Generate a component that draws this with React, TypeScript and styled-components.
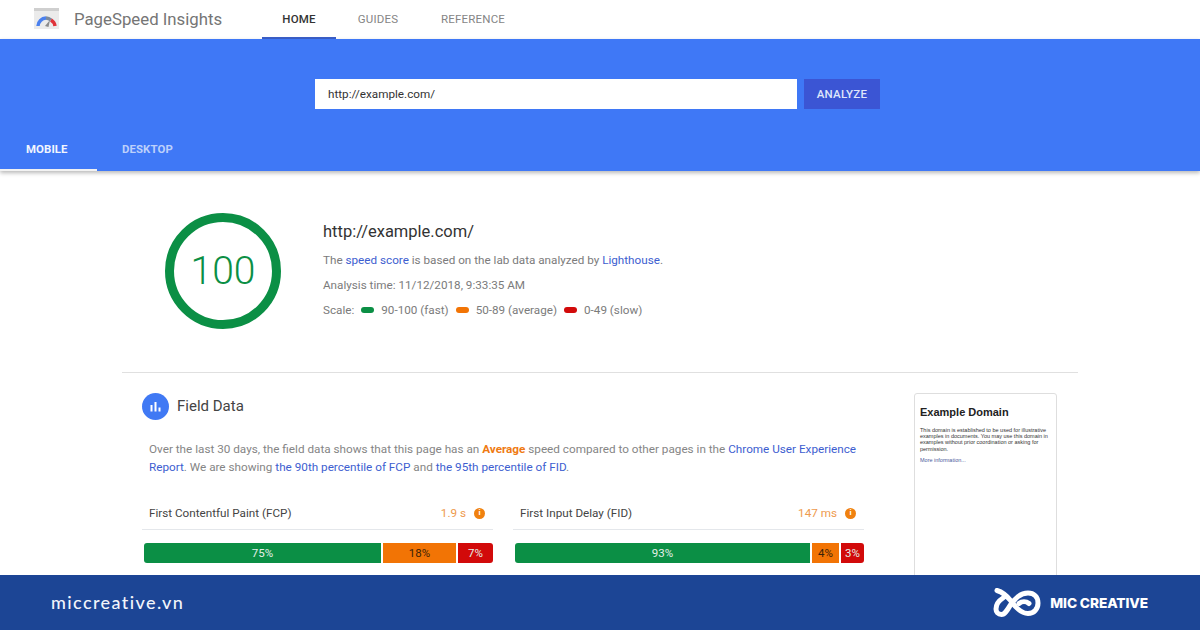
import React from 'react';
import styled, { createGlobalStyle } from 'styled-components';

const GlobalStyle = createGlobalStyle`
  html, body {
    margin: 0;
    padding: 0;
    background: #ffffff;
  }
  * {
    box-sizing: border-box;
  }
`;

const Page = styled.div`
  width: 1200px;
  height: 630px;
  display: flex;
  flex-direction: column;
  overflow: hidden;
  font-family: 'Roboto', sans-serif;
  background: #ffffff;
`;

const TopBar = styled.header`
  height: 39px;
  flex: none;
  display: flex;
  align-items: stretch;
  padding-left: 34px;
  background: #ffffff;
`;

const Brand = styled.div`
  width: 228px;
  display: flex;
  align-items: center;
  gap: 15px;
  padding-bottom: 2px;
`;

const BrandName = styled.span`
  font-size: 16.8px;
  color: #757575;
`;

const NavTab = styled.a<{ $active?: boolean; $width: number }>`
  width: ${p => p.$width}px;
  display: flex;
  align-items: center;
  justify-content: center;
  font-size: 11.5px;
  font-weight: ${p => (p.$active ? 500 : 400)};
  letter-spacing: 0.2px;
  color: ${p => (p.$active ? '#333333' : '#858585')};
  border-bottom: 2px solid ${p => (p.$active ? '#3b5fc9' : 'transparent')};
`;

const Hero = styled.section`
  height: 132px;
  flex: none;
  display: flex;
  flex-direction: column;
  background: #3f78f6;
  box-shadow: 0 2px 4px rgba(0, 0, 0, 0.28);
  position: relative;
`;

const SearchRow = styled.div`
  display: flex;
  gap: 7px;
  padding: 40px 0 0 315px;
`;

const UrlBox = styled.div`
  width: 482px;
  height: 30px;
  display: flex;
  align-items: center;
  padding-left: 13px;
  background: #ffffff;
  font-size: 11.7px;
  color: #333333;
`;

const AnalyzeButton = styled.button`
  width: 76px;
  height: 30px;
  padding: 0;
  border: none;
  background: #3b55d4;
  color: #dfe6fb;
  font-family: inherit;
  font-size: 11.5px;
  font-weight: 500;
  letter-spacing: 0.25px;
`;

const DeviceTabs = styled.div`
  display: flex;
  margin-top: auto;
`;

const DeviceTab = styled.div<{ $active?: boolean; $width: number }>`
  width: ${p => p.$width}px;
  height: 42px;
  padding: 13px 0 0 ${p => (p.$active ? 26 : 25)}px;
  font-size: 11.4px;
  font-weight: 700;
  letter-spacing: 0.1px;
  color: ${p => (p.$active ? '#f1f5fe' : '#bcd0fb')};
  border-bottom: 2px solid ${p => (p.$active ? '#f2f2f2' : 'transparent')};
`;

const Main = styled.main`
  flex: 1;
  min-height: 0;
  overflow: hidden;
  padding: 0 122px;
`;

const Summary = styled.section`
  height: 202px;
  display: flex;
  padding: 42px 0 0 43px;
  border-bottom: 1px solid #e0e0e0;
`;

const ScoreRing = styled.div`
  width: 116px;
  height: 116px;
  flex: none;
  display: flex;
  align-items: center;
  justify-content: center;
  border: 9px solid #0b8f45;
  border-radius: 50%;
  color: #0b8f45;
  font-size: 39px;
  font-weight: 300;
`;

const SummaryText = styled.div`
  margin-left: 42px;
  padding-top: 7px;
`;

const SummaryUrl = styled.h1`
  margin: 0 0 7px;
  height: 24px;
  font-size: 16.5px;
  font-weight: 400;
  line-height: 24px;
  color: #333333;
`;

const Line = styled.p`
  margin: 0 0 7px;
  height: 18px;
  display: flex;
  align-items: center;
  white-space: pre;
  font-size: 11.7px;
  line-height: 18px;
  color: #7b7b7b;
`;

const Link = styled.a`
  color: #3d5ed0;
`;

const ScaleDot = styled.i<{ $color: string }>`
  width: 13px;
  height: 6px;
  margin: 0 7px;
  border-radius: 3px;
  background: ${p => p.$color};
`;

const Field = styled.section`
  display: flex;
  padding: 20px 22px 0 20px;
`;

const FieldBody = styled.div`
  width: 722px;
`;

const FieldHead = styled.div`
  height: 27px;
  display: flex;
  align-items: center;
  gap: 8px;
`;

const FieldIcon = styled.span`
  width: 27px;
  height: 27px;
  display: flex;
  align-items: center;
  justify-content: center;
  border-radius: 50%;
  background: #4079f4;
`;

const FieldTitle = styled.h2`
  margin: 0;
  padding-bottom: 1px;
  font-size: 15px;
  font-weight: 400;
  color: #444444;
`;

const Description = styled.p`
  margin: 20px 0 0 7px;
  width: 715px;
  font-size: 11.72px;
  line-height: 18px;
  color: #858585;
`;

const Average = styled.b`
  font-weight: 700;
  color: #ef7a12;
`;

const Metrics = styled.div`
  display: grid;
  grid-template-columns: 351px 351px;
  column-gap: 20px;
  margin-top: 19px;
`;

const MetricRow = styled.div`
  height: 35px;
  display: flex;
  align-items: center;
  padding: 2px 8px 0 7px;
  border-bottom: 1px solid #e4e7eb;
  font-size: 11.7px;
  color: #444444;
`;

const MetricValue = styled.span`
  margin-left: auto;
  color: #ee9a4d;
`;

const InfoDot = styled.span`
  width: 11px;
  height: 11px;
  margin-left: 8px;
  display: flex;
  align-items: center;
  justify-content: center;
  border-radius: 50%;
  background: #f0810f;
  color: #fff;
  font-size: 8px;
  font-weight: 700;
  line-height: 1;
`;

const Bars = styled.div`
  display: flex;
  gap: 2px;
  margin: 13px 0 0 2px;
  height: 20px;
  border-radius: 3px;
  overflow: hidden;
`;

const Bar = styled.div<{ $color: string; $dark?: boolean; $width: number }>`
  width: ${p => p.$width}px;
  display: flex;
  align-items: center;
  justify-content: center;
  background: ${p => p.$color};
  color: ${p => (p.$dark ? '#3a2208' : '#e4f0e8')};
  font-size: 11.5px;
`;

const Preview = styled.aside`
  width: 143px;
  height: 260px;
  margin-left: 50px;
  padding: 12px 4px 13px 5px;
  flex: none;
  border: 1px solid #dedede;
  border-radius: 3px;
  font-family: 'Liberation Sans', Arial, sans-serif;
`;

const PreviewTitle = styled.h3`
  margin: 0 0 8px;
  font-size: 11px;
  font-weight: 700;
  line-height: 13px;
  color: #222222;
`;

const PreviewText = styled.p`
  margin: 0 0 5px;
  font-size: 5.5px;
  line-height: 6.2px;
  color: #333333;
`;

const PreviewLink = styled.a`
  display: block;
  font-size: 5.5px;
  line-height: 6px;
  color: #4a5a9c;
`;

const Footer = styled.footer`
  height: 55px;
  flex: none;
  display: flex;
  align-items: center;
  justify-content: space-between;
  padding: 0 52px 0 51px;
  background: #1c4595;
  color: #ffffff;
  position: relative;
`;

const Site = styled.span`
  font-family: 'Lato', sans-serif;
  font-size: 18px;
  font-weight: 500;
  letter-spacing: 1.4px;
  padding-bottom: 2px;
  color: #f2f5fb;
`;

const Mark = styled.div`
  display: flex;
  align-items: center;
  gap: 9px;
`;

const MarkName = styled.span`
  font-family: 'Inter', sans-serif;
  font-size: 13.7px;
  font-weight: 800;
  letter-spacing: -0.1px;
`;

const PsiLogo = () => (
  <svg width="25" height="21" viewBox="0 0 25 21">
    <rect x="0" y="0" width="25" height="21" fill="#ebebeb" />
    <rect x="0" y="0" width="25" height="3" fill="#cfcfcf" />
    <path d="M4 18 A8.5 8.5 0 0 1 12 10" fill="none" stroke="#4a80ee" strokeWidth="3.5" />
    <path d="M12 10 A8.5 8.5 0 0 1 17 12" fill="none" stroke="#7c8a9c" strokeWidth="3.5" />
    <path d="M17 12 A8.5 8.5 0 0 1 21 18" fill="none" stroke="#e0333a" strokeWidth="3.5" />
    <path d="M11 18 L16 12 L14.5 19 Z" fill="#8b8b8b" />
  </svg>
);

const KnotLogo = () => (
  <svg width="48" height="30" viewBox="0 0 48 30" fill="none" stroke="#ffffff" strokeWidth="5" strokeLinecap="round">
    <path d="M4 2.5 C9 4 14 8 18 13 C23 20 28 25.5 35 25.5 C41 25.5 45 21 45 15 C45 9 41 5 35 5 C27 5 22 11 18 16 C15 21 12 26.5 8.5 26.5 C5 26.5 3 24 3 21 C3 16 6 12.5 10 10" />
    <path d="M26 15.5 C29 13 33 13 36 15.5" />
  </svg>
);

const BarChartIcon = () => (
  <svg width="13" height="13" viewBox="0 0 13 13" fill="#ffffff">
    <rect x="1.5" y="5" width="2" height="6.5" />
    <rect x="5.5" y="2" width="2" height="9.5" />
    <rect x="9.5" y="7.5" width="2" height="4" />
  </svg>
);

const App: React.FC = () => {
  return (
    <Page>
      <GlobalStyle />
      <TopBar>
        <Brand>
          <PsiLogo />
          <BrandName>PageSpeed Insights</BrandName>
        </Brand>
        <NavTab $active $width={74}>HOME</NavTab>
        <NavTab $width={84}>GUIDES</NavTab>
        <NavTab $width={106}>REFERENCE</NavTab>
      </TopBar>
      <Hero>
        <SearchRow>
          <UrlBox>http://example.com/</UrlBox>
          <AnalyzeButton>ANALYZE</AnalyzeButton>
        </SearchRow>
        <DeviceTabs>
          <DeviceTab $active $width={97}>MOBILE</DeviceTab>
          <DeviceTab $width={100}>DESKTOP</DeviceTab>
        </DeviceTabs>
      </Hero>
      <Main>
        <Summary>
          <ScoreRing>100</ScoreRing>
          <SummaryText>
            <SummaryUrl>http://example.com/</SummaryUrl>
            <Line>The <Link>speed score</Link> is based on the lab data analyzed by <Link>Lighthouse</Link>.</Line>
            <Line>Analysis time: 11/12/2018, 9:33:35 AM</Line>
            <Line>
              Scale:
              <ScaleDot $color="#0b8f45" />90-100 (fast)
              <ScaleDot $color="#f27405" />50-89 (average)
              <ScaleDot $color="#d20a0a" />0-49 (slow)
            </Line>
          </SummaryText>
        </Summary>
        <Field>
          <FieldBody>
            <FieldHead>
              <FieldIcon><BarChartIcon /></FieldIcon>
              <FieldTitle>Field Data</FieldTitle>
            </FieldHead>
            <Description>
              Over the last 30 days, the field data shows that this page has an <Average>Average</Average> speed compared to other pages in the <Link>Chrome User Experience Report</Link>. We are showing <Link>the 90th percentile of FCP</Link> and <Link>the 95th percentile of FID</Link>.
            </Description>
            <Metrics>
              <div>
                <MetricRow>
                  First Contentful Paint (FCP)
                  <MetricValue>1.9 s</MetricValue>
                  <InfoDot>i</InfoDot>
                </MetricRow>
                <Bars>
                  <Bar $color="#0b8f45" $width={237}>75%</Bar>
                  <Bar $color="#f27405" $dark $width={73}>18%</Bar>
                  <Bar $color="#d20a0a" $width={35}>7%</Bar>
                </Bars>
              </div>
              <div>
                <MetricRow>
                  First Input Delay (FID)
                  <MetricValue>147 ms</MetricValue>
                  <InfoDot>i</InfoDot>
                </MetricRow>
                <Bars>
                  <Bar $color="#0b8f45" $width={295}>93%</Bar>
                  <Bar $color="#f27405" $dark $width={27}>4%</Bar>
                  <Bar $color="#d20a0a" $width={23}>3%</Bar>
                </Bars>
              </div>
            </Metrics>
          </FieldBody>
          <Preview>
            <PreviewTitle>Example Domain</PreviewTitle>
            <PreviewText>This domain is established to be used for illustrative examples in documents. You may use this domain in examples without prior coordination or asking for permission.</PreviewText>
            <PreviewLink>More information...</PreviewLink>
          </Preview>
        </Field>
      </Main>
      <Footer>
        <Site>miccreative.vn</Site>
        <Mark>
          <KnotLogo />
          <MarkName>MIC CREATIVE</MarkName>
        </Mark>
      </Footer>
    </Page>
  );
};

export default App;
